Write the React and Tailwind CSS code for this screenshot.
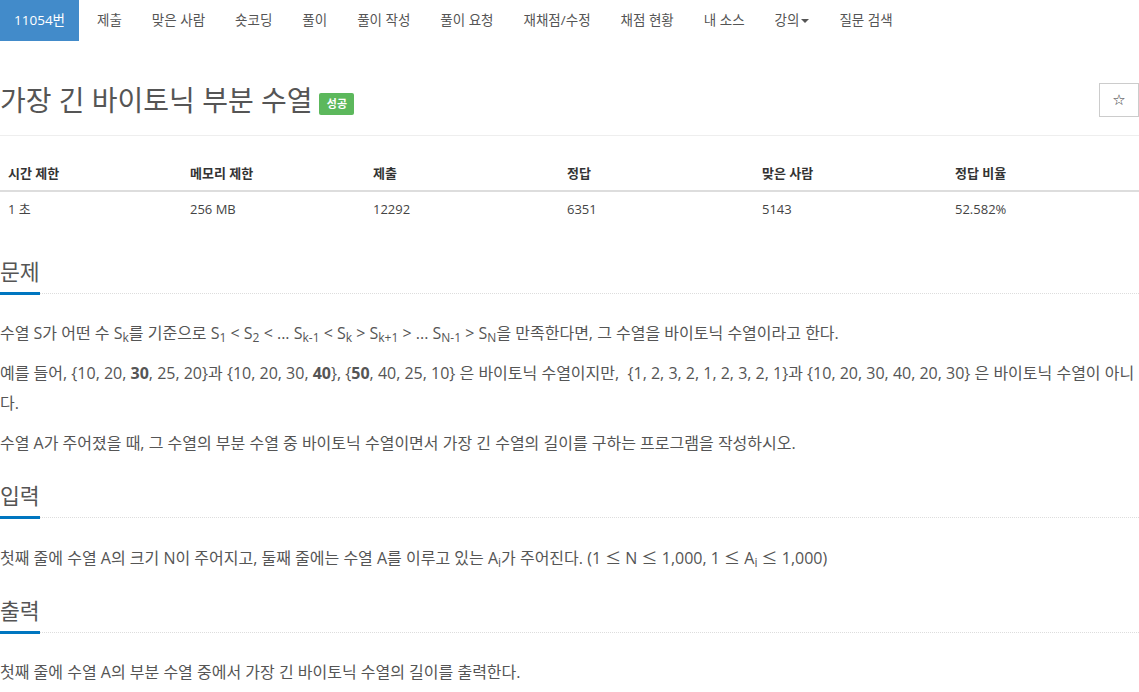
import { useState } from "react"

const menus = ["제출", "맞은 사람", "숏코딩", "풀이", "풀이 작성", "풀이 요청", "재채점/수정", "채점 현황", "내 소스", "강의", "질문 검색"]

const stats = [
  { label: "시간 제한", value: "1 초" },
  { label: "메모리 제한", value: "256 MB" },
  { label: "제출", value: "12292" },
  { label: "정답", value: "6351" },
  { label: "맞은 사람", value: "5143" },
  { label: "정답 비율", value: "52.582%" },
]

const Section = ({ title, children }) => (
  <section className="mb-[24px]">
    <div className="flex border-b border-dotted border-[#ddd]">
      <h2 className="-mb-[2px] border-b-[3px] border-[#0076c0] pb-[6px] text-[21.6px] leading-[28px] text-[#555]">{title}</h2>
    </div>
    <div className="mt-[24px] text-[16px] leading-[30px] text-[#555]">{children}</div>
  </section>
)

const Le = () => <span className="font-['Noto_Sans_CJK_KR',sans-serif]">≤</span>

const App = () => {
  const [starred, setStarred] = useState(false)
  return (
    <div className="h-[692px] w-full overflow-hidden bg-white font-['Open_Sans','Noto_Sans_CJK_KR',sans-serif] text-[#555]">
      <nav className="flex h-[41px] items-center text-[13.5px]">
        <a className="mr-[3px] flex h-full items-center bg-[#428bca] px-[14px] text-white">11054번</a>
        {menus.map((m) => (
          <a key={m} className="flex items-center px-[15px] text-[#555]">
            {m}
            {m === "강의" && (
              <span className="ml-[2px] inline-block h-0 w-0 border-x-[4px] border-t-[4px] border-x-transparent border-t-[#555]" />
            )}
          </a>
        ))}
      </nav>

      <div className="mt-[39px] flex items-center justify-between border-b border-[#eee] pb-[15px]">
        <div className="flex h-[40px] items-center">
          <h1 className="text-[28px] leading-[40px] text-[#555]">가장 긴 바이토닉 부분 수열</h1>
          <span className="ml-[7px] mt-[8px] flex h-[22px] w-[35px] items-center justify-center rounded-[2px] bg-[#5cb85c] text-[11px] font-bold text-white">
            성공
          </span>
        </div>
        <button
          onClick={() => setStarred(!starred)}
          className="flex h-[34px] w-[40px] items-center justify-center border border-[#ccc] font-['DejaVu_Sans',sans-serif] text-[15px] text-[#333]"
        >
          {starred ? "★" : "☆"}
        </button>
      </div>

      <div className="mb-[32px] mt-[20px] text-[13px] leading-[18px]">
        <div className="grid grid-cols-[182px_183px_194px_195px_193px_1fr] border-b-2 border-[#ddd] font-bold text-[#333]">
          {stats.map((s) => (
            <div key={s.label} className="p-[8px]">
              {s.label}
            </div>
          ))}
        </div>
        <div className="grid grid-cols-[182px_183px_194px_195px_193px_1fr] text-[#444]">
          {stats.map((s) => (
            <div key={s.label} className="p-[8px]">
              {s.value}
            </div>
          ))}
        </div>
      </div>

      <Section title="문제">
        <p className="mb-[10px]">
          수열 S가 어떤 수 S<sub>k</sub>를 기준으로 S<sub>1</sub> &lt; S<sub>2</sub> &lt; ... S<sub>k-1</sub> &lt; S
          <sub>k</sub> &gt; S<sub>k+1</sub> &gt; ... S<sub>N-1</sub> &gt; S<sub>N</sub>을 만족한다면, 그 수열을 바이토닉
          수열이라고 한다.
        </p>
        <p className="mb-[10px]">
          예를 들어, {"{"}10, 20, <strong>30</strong>, 25, 20{"}"}과 {"{"}10, 20, 30, <strong>40</strong>
          {"}"}, {"{"}
          <strong>50</strong>, 40, 25, 10{"}"} 은 바이토닉 수열이지만,{"\u00a0 "}
          {"{1, 2, 3, 2, 1, 2, 3, 2, 1}"}과 {"{10, 20, 30, 40, 20, 30}"} 은 바이토닉 수열이 아니다.
        </p>
        <p>
          수열 A가 주어졌을 때, 그 수열의 부분 수열 중 바이토닉 수열이면서 가장 긴 수열의 길이를 구하는 프로그램을
          작성하시오.
        </p>
      </Section>

      <Section title="입력">
        <p>
          첫째 줄에 수열 A의 크기 N이 주어지고, 둘째 줄에는 수열 A를 이루고 있는 A<sub>i</sub>가 주어진다. (1 <Le /> N{" "}
          <Le /> 1,000, 1 <Le /> A<sub>i</sub> <Le /> 1,000)
        </p>
      </Section>

      <Section title="출력">
        <p>첫째 줄에 수열 A의 부분 수열 중에서 가장 긴 바이토닉 수열의 길이를 출력한다.</p>
      </Section>
    </div>
  )
}

export default App
